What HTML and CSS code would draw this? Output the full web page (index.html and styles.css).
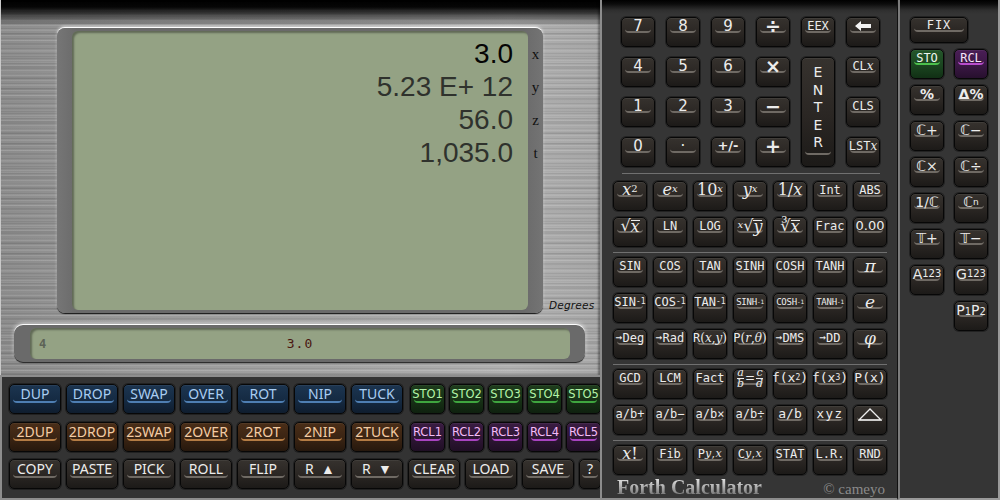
FILE: index.html
```html
<!DOCTYPE html>
<html>
<head>
<meta charset="utf-8">
<title>Forth Calculator</title>
<link rel="stylesheet" href="styles.css">
</head>
<body>
<div class="app">
  <div class="left">
    <div class="metal">
      <div class="lcd-row">
        <div class="bezel">
          <div class="lcd">
            <div class="sl sx">3.0</div>
            <div class="sl">5.23 E+ 12</div>
            <div class="sl">56.0</div>
            <div class="sl">1,035.0</div>
          </div>
          <div class="labels"><span>x</span><span>y</span><span>z</span><span>t</span></div>
        </div>
        <div class="deg">Degrees</div>
      </div>
      <div class="cmd-bezel">
        <div class="cmd"><span class="cnt">4</span><span class="cval">3.0</span><span></span></div>
      </div>
    </div>
    <div class="stackpad">
      <div class="srow">
        <div class="k sk blue"><div class="f">DUP</div></div>
        <div class="k sk blue"><div class="f">DROP</div></div>
        <div class="k sk blue"><div class="f">SWAP</div></div>
        <div class="k sk blue"><div class="f">OVER</div></div>
        <div class="k sk blue"><div class="f">ROT</div></div>
        <div class="k sk blue"><div class="f">NIP</div></div>
        <div class="k sk blue"><div class="f">TUCK</div></div>
        <div class="smgrp">
          <div class="k sm green"><div class="f">STO1</div></div>
          <div class="k sm green"><div class="f">STO2</div></div>
          <div class="k sm green"><div class="f">STO3</div></div>
          <div class="k sm green"><div class="f">STO4</div></div>
          <div class="k sm green"><div class="f">STO5</div></div>
        </div>
      </div>
      <div class="srow">
        <div class="k sk orange"><div class="f">2DUP</div></div>
        <div class="k sk orange"><div class="f">2DROP</div></div>
        <div class="k sk orange"><div class="f">2SWAP</div></div>
        <div class="k sk orange"><div class="f">2OVER</div></div>
        <div class="k sk orange"><div class="f">2ROT</div></div>
        <div class="k sk orange"><div class="f">2NIP</div></div>
        <div class="k sk orange"><div class="f">2TUCK</div></div>
        <div class="smgrp">
          <div class="k sm purple"><div class="f">RCL1</div></div>
          <div class="k sm purple"><div class="f">RCL2</div></div>
          <div class="k sm purple"><div class="f">RCL3</div></div>
          <div class="k sm purple"><div class="f">RCL4</div></div>
          <div class="k sm purple"><div class="f">RCL5</div></div>
        </div>
      </div>
      <div class="srow">
        <div class="k sk"><div class="f">COPY</div></div>
        <div class="k sk"><div class="f">PASTE</div></div>
        <div class="k sk"><div class="f">PICK</div></div>
        <div class="k sk"><div class="f">ROLL</div></div>
        <div class="k sk"><div class="f">FLIP</div></div>
        <div class="k sk"><div class="f">R&nbsp;&nbsp;▲</div></div>
        <div class="k sk"><div class="f">R&nbsp;&nbsp;▼</div></div>
        <div class="k sk"><div class="f">CLEAR</div></div>
        <div class="k sk"><div class="f">LOAD</div></div>
        <div class="k sk"><div class="f">SAVE</div></div>
        <div class="k sk q"><div class="f">?</div></div>
      </div>
    </div>
  </div>

  <div class="mid">
    <div class="numgrid">
      <div class="k"><div class="f d">7</div></div>
      <div class="k"><div class="f d">8</div></div>
      <div class="k"><div class="f d">9</div></div>
      <div class="k"><div class="f op">÷</div></div>
      <div class="k"><div class="f m">EEX</div></div>
      <div class="k"><div class="f"><svg class="bk" width="16" height="10" viewBox="0 0 16 10"><path d="M0 5 L6 0 L6 3 L16 3 L16 7 L6 7 L6 10 Z" fill="#f2f2f2"/></svg></div></div>
      <div class="k"><div class="f d">4</div></div>
      <div class="k"><div class="f d">5</div></div>
      <div class="k"><div class="f d">6</div></div>
      <div class="k"><div class="f op">×</div></div>
      <div class="k enter"><div class="f ent"><span>E</span><span>N</span><span>T</span><span>E</span><span>R</span></div></div>
      <div class="k"><div class="f m">CL<i class="mi">x</i></div></div>
      <div class="k"><div class="f d">1</div></div>
      <div class="k"><div class="f d">2</div></div>
      <div class="k"><div class="f d">3</div></div>
      <div class="k"><div class="f op">−</div></div>
      <div class="k"><div class="f m">CLS</div></div>
      <div class="k"><div class="f d">0</div></div>
      <div class="k"><div class="f d">·</div></div>
      <div class="k"><div class="f d pm">+/-</div></div>
      <div class="k"><div class="f op">+</div></div>
      <div class="k"><div class="f m">LST<i class="mi">x</i></div></div>
    </div>
    <div class="sep sep-top"></div>

    <div class="fgrid">
      <div class="k"><div class="f i"><i>x</i><sup>2</sup></div></div>
      <div class="k"><div class="f i"><i>e</i><sup><i>x</i></sup></div></div>
      <div class="k"><div class="f i">10<sup><i>x</i></sup></div></div>
      <div class="k"><div class="f i"><i>y</i><sup><i>x</i></sup></div></div>
      <div class="k"><div class="f i">1/<i>x</i></div></div>
      <div class="k"><div class="f m">Int</div></div>
      <div class="k"><div class="f m">ABS</div></div>

      <div class="k"><div class="f i">√<i class="ov">x</i></div></div>
      <div class="k"><div class="f m">LN</div></div>
      <div class="k"><div class="f m">LOG</div></div>
      <div class="k"><div class="f i"><sup class="rx"><i>x</i></sup>√<i class="ov">y</i></div></div>
      <div class="k"><div class="f i">∛<i class="ov">x</i></div></div>
      <div class="k"><div class="f m">Frac</div></div>
      <div class="k"><div class="f d sm2">0.00</div></div>
    </div>
    <div class="sep"></div>
    <div class="fgrid">
      <div class="k"><div class="f m">SIN</div></div>
      <div class="k"><div class="f m">COS</div></div>
      <div class="k"><div class="f m">TAN</div></div>
      <div class="k"><div class="f m">SINH</div></div>
      <div class="k"><div class="f m">COSH</div></div>
      <div class="k"><div class="f m">TANH</div></div>
      <div class="k"><div class="f i big"><i>π</i></div></div>

      <div class="k"><div class="f m">SIN<sup class="inv">-1</sup></div></div>
      <div class="k"><div class="f m">COS<sup class="inv">-1</sup></div></div>
      <div class="k"><div class="f m">TAN<sup class="inv">-1</sup></div></div>
      <div class="k"><div class="f m xs">SINH<sup class="inv">-1</sup></div></div>
      <div class="k"><div class="f m xs">COSH<sup class="inv">-1</sup></div></div>
      <div class="k"><div class="f m xs">TANH<sup class="inv">-1</sup></div></div>
      <div class="k"><div class="f i big"><i>e</i></div></div>

      <div class="k"><div class="f m"><span class="ar">→</span>Deg</div></div>
      <div class="k"><div class="f m"><span class="ar">→</span>Rad</div></div>
      <div class="k"><div class="f m">R<span class="it">(<i>x</i>,<i>y</i>)</span></div></div>
      <div class="k"><div class="f m">P<span class="it">(<i>r</i>,<i>θ</i>)</span></div></div>
      <div class="k"><div class="f m"><span class="ar">→</span>DMS</div></div>
      <div class="k"><div class="f m"><span class="ar">→</span>DD</div></div>
      <div class="k"><div class="f i big"><i>φ</i></div></div>
    </div>
    <div class="sep"></div>
    <div class="fgrid">
      <div class="k"><div class="f m">GCD</div></div>
      <div class="k"><div class="f m">LCM</div></div>
      <div class="k"><div class="f m">Fact</div></div>
      <div class="k"><div class="f i frk"><span class="fr"><i>a</i><i>b</i></span>=<span class="fr"><i>c</i><i>d</i></span></div></div>
      <div class="k"><div class="f m m13">f(x<sup class="p">2</sup>)</div></div>
      <div class="k"><div class="f m m13">f(x<sup class="p">3</sup>)</div></div>
      <div class="k"><div class="f m m13">P(x)</div></div>

      <div class="k"><div class="f m">a/b+</div></div>
      <div class="k"><div class="f m">a/b−</div></div>
      <div class="k"><div class="f m">a/b×</div></div>
      <div class="k"><div class="f m">a/b÷</div></div>
      <div class="k"><div class="f m m13">a/b</div></div>
      <div class="k"><div class="f m sp">xyz</div></div>
      <div class="k"><div class="f"><svg width="24" height="13" viewBox="0 0 24 13"><path d="M1 12 L12 1 L23 12 Z" fill="none" stroke="#eeeeee" stroke-width="1.3"/></svg></div></div>
    </div>
    <div class="sep"></div>
    <div class="fgrid">
      <div class="k"><div class="f i"><i>x</i>!</div></div>
      <div class="k"><div class="f m">Fib</div></div>
      <div class="k"><div class="f m">P<span class="it sub"><i>y</i>,<i>x</i></span></div></div>
      <div class="k"><div class="f m">C<span class="it sub"><i>y</i>,<i>x</i></span></div></div>
      <div class="k"><div class="f m">STAT</div></div>
      <div class="k"><div class="f m">L.R.</div></div>
      <div class="k"><div class="f m">RND</div></div>
    </div>
    <div class="footer">
      <span class="brand">Forth Calculator</span>
      <span class="copy">© cameyo</span>
    </div>
  </div>

  <div class="right">
    <div class="k fix"><div class="f m">FIX</div></div>
    <div class="rgrid">
      <div class="k green2"><div class="f m">STO</div></div>
      <div class="k purple2"><div class="f m">RCL</div></div>
      <div class="k"><div class="f c b">%</div></div>
      <div class="k"><div class="f c b">Δ%</div></div>
      <div class="k"><div class="f c">ℂ+</div></div>
      <div class="k"><div class="f c">ℂ−</div></div>
      <div class="k"><div class="f c">ℂ×</div></div>
      <div class="k"><div class="f c">ℂ÷</div></div>
      <div class="k"><div class="f c">1/ℂ</div></div>
      <div class="k"><div class="f c">ℂ<sup class="n">n</sup></div></div>
      <div class="k"><div class="f c">𝕋+</div></div>
      <div class="k"><div class="f c">𝕋−</div></div>
      <div class="k"><div class="f c">A<span class="dg">123</span></div></div>
      <div class="k"><div class="f c">G<span class="dg">123</span></div></div>
      <div class="empty"></div>
      <div class="k"><div class="f c">P<span class="sb">1</span>P<span class="sb">2</span></div></div>
    </div>
  </div>
</div>
</body>
</html>
```

FILE: styles.css
```css
html, body {
  margin: 0;
  padding: 0;
  width: 1000px;
  height: 500px;
  overflow: hidden;
  background: #1a1a1a;
  font-family: "DejaVu Sans", sans-serif;
}

.app {
  display: flex;
  width: 1000px;
  height: 500px;
}

/* ---------- left column ---------- */
.left {
  width: 600px;
  display: flex;
  flex-direction: column;
  flex: none;
}

.metal {
  height: 375px;
  box-sizing: border-box;
  padding-top: 28px;
  box-shadow: inset 1px 0 0 #c9c9c9, inset -2px 0 2px rgba(0,0,0,.35);
  background:
    linear-gradient(180deg, #000 0, #060606 7px, rgba(0,0,0,.6) 14px, rgba(0,0,0,0) 25px),
    repeating-linear-gradient(180deg, rgba(255,255,255,.10) 0 1px, rgba(0,0,0,0) 1px 3px, rgba(0,0,0,.07) 3px 4px, rgba(0,0,0,0) 4px 5px),
    repeating-linear-gradient(180deg, rgba(0,0,0,.06) 0 2px, rgba(255,255,255,0) 2px 7px, rgba(255,255,255,.06) 7px 8px, rgba(255,255,255,0) 8px 11px),
    linear-gradient(90deg, #8c8c8c 0, #9a9a9a 25%, #a3a3a3 55%, #b0b0b0 85%, #a6a6a6 100%);
}

.lcd-row {
  display: flex;
  align-items: flex-end;
  padding-left: 57px;
  height: 285px;
}

.bezel {
  width: 486px;
  height: 285px;
  box-sizing: border-box;
  padding: 3px 0 3px 15px;
  display: flex;
  border-radius: 8px;
  background: linear-gradient(90deg, #767676, #6a6a6a 4%, #6a6a6a 96%, #747474);
  box-shadow: 0 -1px 0 rgba(255,255,255,.95), 0 -2px 3px rgba(255,255,255,.55), 0 1px 1px #111;
}

.lcd {
  flex: 1;
  box-sizing: border-box;
  padding: 6px 15px 0 0;
  border-radius: 6px;
  background: #94a284;
  box-shadow: inset 2px 2px 2px rgba(0,0,0,.35);
  text-align: right;
}

.sl {
  font-family: "Liberation Sans", sans-serif;
  font-size: 28px;
  line-height: 33px;
  height: 33px;
  color: #2f322d;
  white-space: pre;
}
.sx { color: #050505; }

.labels {
  width: 15px;
  box-sizing: border-box;
  padding-top: 7px;
  display: flex;
  flex-direction: column;
  align-items: center;
  font-family: "Liberation Serif", serif;
  font-size: 15px;
  color: #101010;
}
.labels span {
  line-height: 33px;
  height: 33px;
}

.deg {
  margin-left: 6px;
  font-family: "DejaVu Sans", sans-serif;
  font-style: italic;
  font-size: 10.5px;
  line-height: 13px;
  color: #111;
  letter-spacing: .2px;
  margin-bottom: 1px;
}

.cmd-bezel {
  margin: 12px 0 0 14px;
  width: 571px;
  height: 37px;
  box-sizing: border-box;
  padding: 3px 15px 3px 16px;
  border-radius: 9px;
  background: #6a6a6a;
  box-shadow: 0 -1px 0 rgba(255,255,255,.95), 0 -2px 4px rgba(255,255,255,.6), 0 1px 1px #111;
}
.cmd {
  height: 100%;
  border-radius: 6px;
  background: #94a284;
  box-shadow: inset 2px 2px 2px rgba(0,0,0,.35);
  display: grid;
  grid-template-columns: 1fr auto 1fr;
  align-items: center;
  font-family: "DejaVu Sans Mono", monospace;
}
.cnt {
  padding-left: 9px;
  font-size: 12px;
  font-weight: bold;
  color: #5c6256;
}
.cval {
  font-size: 13px;
  letter-spacing: 1px;
  color: #4a1610;
}

.stackpad {
  flex: 1;
  box-sizing: border-box;
  border-top: 2px solid #8d8d8d;
  border-left: 2px solid #8d8d8d;
  border-bottom: 2px solid #8d8d8d;
  background: #333333;
  padding: 7px 0 0 7px;
  display: flex;
  flex-direction: column;
  gap: 7.5px;
  overflow: hidden;
}
.srow {
  display: flex;
  gap: 5px;
}
.smgrp {
  display: flex;
  gap: 4px;
  margin-left: 2px;
}

/* ---------- keys ---------- */
.k {
  --lip: #6f6a64;
  --tx: #ececec;
  --t1: #36322e;
  --t2: #2a2623;
  --b2: #1c1a18;
  flex: none;
  width: 34px;
  height: 30px;
  box-sizing: border-box;
  border: 1px solid #070707;
  border-radius: 5px;
  padding: 0 3px;
  background: linear-gradient(180deg, var(--t1) 0, var(--t2) 55%, var(--b2) 100%);
  box-shadow: 0 0 0 1px rgba(0,0,0,.35), inset 0 1px 0 rgba(255,255,255,.06);
  color: var(--tx);
}
.f {
  height: 15px;
  box-sizing: border-box;
  padding-top: 4px;
  padding-bottom: 1px;
  border-bottom: 2px solid var(--lip);
  border-radius: 0 0 4px 4px;
  display: flex;
  align-items: center;
  justify-content: center;
  white-space: nowrap;
  line-height: 10px;
}

.sk {
  width: 52px;
  font-family: "Noto Sans", "Open Sans", sans-serif;
  font-size: 14px;
}
.sk .f { height: 18px; padding-top: 3px; padding-bottom: 1px; line-height: 14px; }
.sk.q { width: 22px; padding: 0 2px; }
.sm {
  width: 35px;
  font-family: "DejaVu Sans", sans-serif;
  font-size: 11.5px;
}
.sm .f { height: 18px; padding-top: 3px; padding-bottom: 1px; line-height: 12px; }

.blue   { --lip: #4e7eb2; --tx: #a9cdf2; --t1: #1c3550; --t2: #152a42; --b2: #0f1d2e; }
.orange { --lip: #b47c44; --tx: #f4cca4; --t1: #4a2e18; --t2: #3a2413; --b2: #26180d; }
.green  { --lip: #3fa53f; --tx: #b4f4a8; --t1: #1e3d1c; --t2: #173116; --b2: #0f210f; }
.purple { --lip: #a844c0; --tx: #f4bcf8; --t1: #3a1c42; --t2: #2e1634; --b2: #1f0f24; }
.green2 { --lip: #4cc04c; --tx: #eef6ee; --t1: #24562a; --t2: #1b4520; --b2: #113015; }
.purple2 { --lip: #b84ccc; --tx: #f6e4f8; --t1: #4a1e56; --t2: #3a1744; --b2: #27102e; }

/* ---------- middle column ---------- */
.mid {
  width: 298px;
  flex: none;
  box-sizing: border-box;
  border-left: 2px solid #8c8c8c;
  border-bottom: 2px solid #8c8c8c;
  border-right: 1px solid #111;
  background: linear-gradient(180deg, #000 0, #0c0c0c 4px, #2e2e2e 10px, #353535 14px, #353535 100%);
  padding-top: 17px;
  overflow: hidden;
}
.numgrid {
  margin-left: 19px;
  display: grid;
  grid-template-columns: repeat(6, 34px);
  grid-auto-rows: 30px;
  gap: 10px 11px;
}
.enter {
  grid-column: 5;
  grid-row: 2 / span 3;
  height: 110px;
}
.enter .f.ent {
  height: 97px;
  padding-top: 6px;
  flex-direction: column;
  justify-content: flex-start;
  font-family: "DejaVu Sans", sans-serif;
  font-size: 14px;
  line-height: 17.5px;
}

.sep {
  height: 1px;
  background: #707070;
  margin: 5px 0 4px 11px;
  width: 274px;
}
.sep-top {
  margin: 6px 0 7px 20px;
  width: 258px;
}

.fgrid {
  margin-left: 11px;
  display: grid;
  grid-template-columns: repeat(7, 34px);
  grid-auto-rows: 30px;
  gap: 6px 6px;
}

.d { font-family: "DejaVu Sans", sans-serif; font-size: 15px; }
.d.pm { font-weight: bold; font-size: 13px; }
.d.sm2 { font-size: 13px; }
.op { font-family: "DejaVu Sans", sans-serif; font-size: 19px; font-weight: bold; }
.m { font-family: "DejaVu Sans Mono", monospace; font-size: 12px; }
.m.xs { font-size: 9px; letter-spacing: -.2px; }
.m.m13 { font-size: 13px; }
.m.sp { letter-spacing: 1.5px; font-size: 12.5px; }
.mi { font-family: "DejaVu Serif", serif; font-style: italic; }
.i { font-family: "DejaVu Serif", serif; font-size: 16px; }
.i i { font-style: italic; }
.i.big { font-size: 17px; }
.i sup { font-size: 10px; line-height: 0; position: relative; top: -1px; }
.ov { border-top: 1px solid #ececec; line-height: 12px; }
.rx { margin-right: 0; font-size: 9px; }
.inv { font-size: 8px; line-height: 0; }
.m.xs .inv { font-size: 6px; }
.p { font-size: 8px; line-height: 0; }
.ar { font-size: 11px; }
.it { font-family: "DejaVu Serif", serif; }
.it i { font-style: italic; }
.it.sub { font-size: 11px; letter-spacing: .5px; }
.frk { font-size: 12px; gap: 1px; }
.fr {
  display: inline-flex;
  flex-direction: column;
  align-items: center;
  font-size: 11px;
  line-height: 10px;
}
.fr i:first-child { border-bottom: 1px solid #ececec; }
.bk { display: block; }

.footer {
  margin-top: 3px;
  padding: 0 12px 0 15px;
  display: flex;
  justify-content: space-between;
  align-items: baseline;
  line-height: 18px;
}
.brand {
  font-family: "Liberation Serif", serif;
  font-weight: bold;
  font-size: 20px;
  background: linear-gradient(180deg, #e6e6e6 0%, #b4b4b4 45%, #6e6e6e 100%);
  -webkit-background-clip: text;
  background-clip: text;
  color: transparent;
}
.copy {
  font-family: "Liberation Serif", serif;
  font-size: 15px;
  color: #8a8a8a;
}

/* ---------- right column ---------- */
.right {
  flex: 1;
  box-sizing: border-box;
  border-left: 2px solid #7c7c7c;
  border-right: 2px solid #9a9a9a;
  border-bottom: 2px solid #9a9a9a;
  background: linear-gradient(180deg, #000 0, #0c0c0c 4px, #2e2e2e 10px, #353535 14px, #353535 100%);
  padding: 17px 0 0 10px;
}
.fix {
  width: 58px;
  height: 26px;
  margin-bottom: 6px;
}
.fix .f { height: 14px; padding-top: 3px; letter-spacing: 1px; }
.rgrid {
  display: grid;
  grid-template-columns: repeat(2, 34px);
  grid-auto-rows: 30px;
  gap: 6px 10px;
}
.c { font-family: "DejaVu Sans", sans-serif; font-size: 14px; }
.c.b { font-weight: bold; }
.c .n { font-size: 9px; line-height: 0; }
.c .dg { font-size: 10px; }
.c .sb { font-size: 10px; position: relative; top: 2px; }
```
